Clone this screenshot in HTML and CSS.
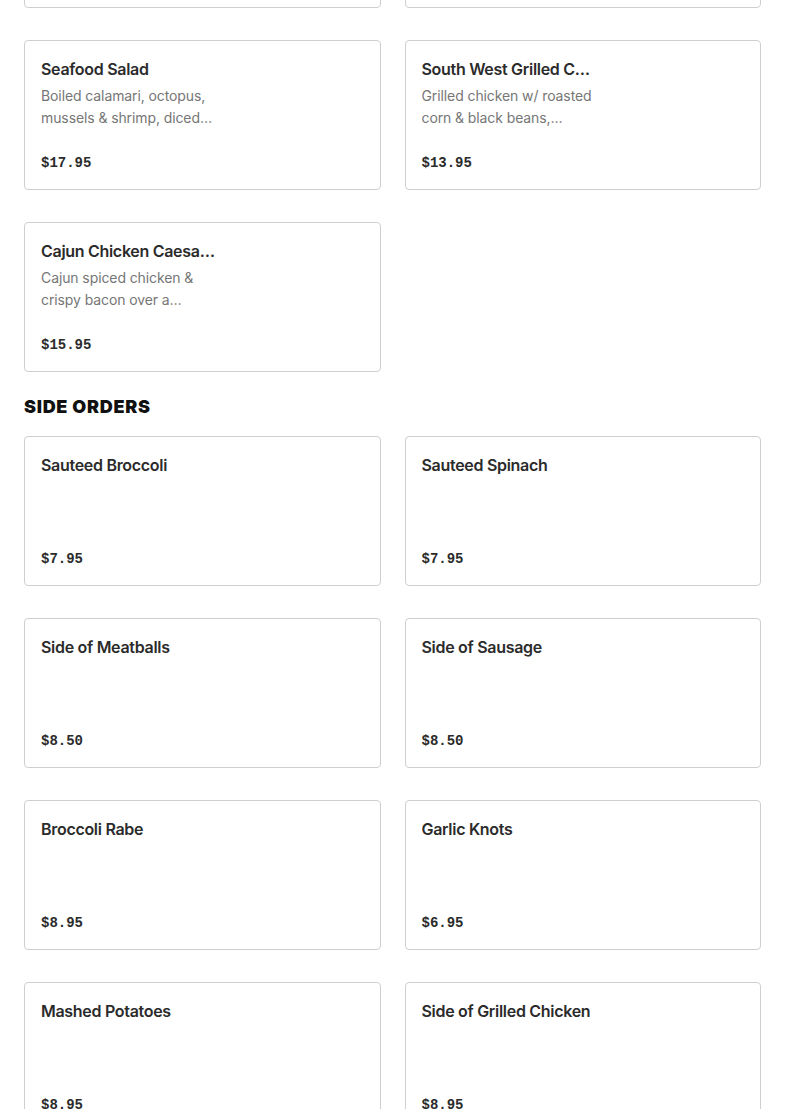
FILE: index.html
```html
<!DOCTYPE html>
<html lang="en">
<head>
    <meta charset="UTF-8">
    <meta name="viewport" content="width=device-width, initial-scale=1.0">
    <title>Menu</title>
    <link rel="stylesheet" href="styles.css">
</head>
<body>
    <div class="menu">
        <!-- Salads (scrolled, upper rows out of view) -->
        <section class="section section-scrolled">
            <div class="grid">
                <div class="card">
                    <div class="card-text">
                        <h3 class="item-name">Greek Salad</h3>
                        <p class="item-desc">Romaine, tomatoes, cucumbers, olives &amp; feta</p>
                    </div>
                    <div class="price">$12.95</div>
                </div>
                <div class="card">
                    <div class="card-text">
                        <h3 class="item-name">Antipasto Salad</h3>
                        <p class="item-desc">Salami, ham, provolone &amp; roasted peppers</p>
                    </div>
                    <div class="price">$14.95</div>
                </div>
                <div class="card">
                    <div class="card-text">
                        <h3 class="item-name">Seafood Salad</h3>
                        <p class="item-desc">Boiled calamari, octopus, mussels &amp; shrimp, diced celery &amp; onions</p>
                    </div>
                    <div class="price">$17.95</div>
                </div>
                <div class="card">
                    <div class="card-text">
                        <h3 class="item-name">South West Grilled Chicken Salad</h3>
                        <p class="item-desc">Grilled chicken w/ roasted corn &amp; black beans, tomatoes &amp; avocado</p>
                    </div>
                    <div class="price">$13.95</div>
                </div>
                <div class="card">
                    <div class="card-text">
                        <h3 class="item-name">Cajun Chicken Caesar Salad</h3>
                        <p class="item-desc">Cajun spiced chicken &amp; crispy bacon over a Caesar salad</p>
                    </div>
                    <div class="price">$15.95</div>
                </div>
            </div>
        </section>

        <section class="section">
            <h2 class="section-title">Side Orders</h2>
            <div class="grid">
                <div class="card">
                    <div class="card-text"><h3 class="item-name">Sauteed Broccoli</h3></div>
                    <div class="price">$7.95</div>
                </div>
                <div class="card">
                    <div class="card-text"><h3 class="item-name">Sauteed Spinach</h3></div>
                    <div class="price">$7.95</div>
                </div>
                <div class="card">
                    <div class="card-text"><h3 class="item-name">Side of Meatballs</h3></div>
                    <div class="price">$8.50</div>
                </div>
                <div class="card">
                    <div class="card-text"><h3 class="item-name">Side of Sausage</h3></div>
                    <div class="price">$8.50</div>
                </div>
                <div class="card">
                    <div class="card-text"><h3 class="item-name">Broccoli Rabe</h3></div>
                    <div class="price">$8.95</div>
                </div>
                <div class="card">
                    <div class="card-text"><h3 class="item-name">Garlic Knots</h3></div>
                    <div class="price">$6.95</div>
                </div>
                <div class="card">
                    <div class="card-text"><h3 class="item-name">Mashed Potatoes</h3></div>
                    <div class="price">$8.95</div>
                </div>
                <div class="card">
                    <div class="card-text"><h3 class="item-name">Side of Grilled Chicken</h3></div>
                    <div class="price">$8.95</div>
                </div>
            </div>
        </section>
    </div>
</body>
</html>
```

FILE: styles.css
```css
body {
    margin: 0;
    font-family: Inter, "Liberation Sans", sans-serif;
    color: #2d2d2d;
    background: #fff;
}
.menu {
    padding: 0 24px;
}
.section-scrolled {
    margin-top: -142px;
}
.section {
    margin-bottom: 23px;
}
.section-title {
    margin: 0 0 17px;
    font-size: 18px;
    line-height: 24px;
    font-weight: 900;
    text-transform: uppercase;
    color: #111;
    letter-spacing: 0.7px;
}
.grid {
    display: grid;
    grid-template-columns: 1fr 1fr;
    column-gap: 24px;
    row-gap: 32px;
}
.card {
    box-sizing: border-box;
    height: 150px;
    padding: 16px;
    border: 1px solid #cfcfcf;
    border-radius: 4px;
    display: flex;
    flex-direction: column;
}
.card-text {
    width: 174px;
}
.item-name {
    margin: 0 0 4px;
    font-size: 16px;
    line-height: 24px;
    font-weight: 600;
    letter-spacing: -0.3px;
    color: #2b2b2b;
    white-space: nowrap;
    overflow: hidden;
    text-overflow: ellipsis;
}
.item-desc {
    margin: 0;
    font-size: 14px;
    line-height: 22px;
    letter-spacing: -0.1px;
    color: #767676;
    display: -webkit-box;
    -webkit-line-clamp: 2;
    -webkit-box-orient: vertical;
    overflow: hidden;
}
.price {
    margin-top: auto;
    font-family: "Liberation Mono", "DejaVu Sans Mono", monospace;
    font-size: 14px;
    line-height: 20px;
    font-weight: bold;
    color: #2b2b2b;
}
```
